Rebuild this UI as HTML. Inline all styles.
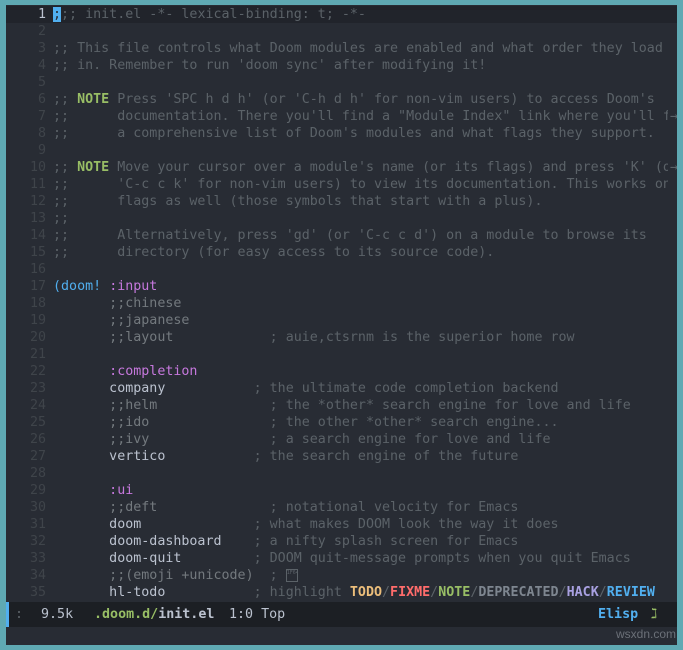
<!DOCTYPE html>
<html><head><style>
html,body{margin:0;padding:0;}
body{width:683px;height:650px;background:#5fa9b3;position:relative;overflow:hidden;font-family:"DejaVu Sans Mono","Liberation Mono",monospace;font-size:13.33px;}
#win{position:absolute;left:6px;top:5px;width:671px;height:640px;background:#282c34;overflow:hidden;}
.l{position:absolute;left:0;height:17px;line-height:17px;white-space:pre;width:671px;}
.n{display:inline-block;width:40px;text-align:right;color:#3f444a;}
.t{position:absolute;left:47px;top:0;width:615px;overflow:hidden;color:#bbc2cf;}
.c{color:#5b6268}.m{color:#73797e}.k{color:#c678dd}.b{color:#51afef}
.note{color:#98be65;font-weight:bold}
.arr{position:absolute;left:664px;color:#5b6268;}
#ml{position:absolute;left:0;top:597px;width:671px;height:25px;background:#1c1f24;line-height:25px;color:#bbc2cf;white-space:pre;font-size:13.33px;}
#ml span{position:absolute;top:0;}
</style></head><body>
<div id="win">
<div class="l" style="top:1px;background:#21242b"><span class="n" style="color:#bbc2cf">1</span><span class="t"><span style="background:#51afef;color:#282c34">;</span><span class="c">;; init.el -*- lexical-binding: t; -*-</span></span></div>
<div class="l" style="top:18px"><span class="n">2</span></div>
<div class="l" style="top:35px"><span class="n">3</span><span class="t c">;; This file controls what Doom modules are enabled and what order they load</span></div>
<div class="l" style="top:52px"><span class="n">4</span><span class="t c">;; in. Remember to run 'doom sync' after modifying it!</span></div>
<div class="l" style="top:69px"><span class="n">5</span></div>
<div class="l" style="top:86px"><span class="n">6</span><span class="t c">;; <span class="note">NOTE</span> Press 'SPC h d h' (or 'C-h d h' for non-vim users) to access Doom's</span></div>
<div class="l" style="top:103px"><span class="n">7</span><span class="t c">;;      documentation. There you'll find a "Module Index" link where you'll fi</span><span class="arr">→</span></div>
<div class="l" style="top:120px"><span class="n">8</span><span class="t c">;;      a comprehensive list of Doom's modules and what flags they support.</span></div>
<div class="l" style="top:137px"><span class="n">9</span></div>
<div class="l" style="top:154px"><span class="n">10</span><span class="t c">;; <span class="note">NOTE</span> Move your cursor over a module's name (or its flags) and press 'K' (or</span><span class="arr">→</span></div>
<div class="l" style="top:171px"><span class="n">11</span><span class="t c">;;      'C-c c k' for non-vim users) to view its documentation. This works on</span></div>
<div class="l" style="top:188px"><span class="n">12</span><span class="t c">;;      flags as well (those symbols that start with a plus).</span></div>
<div class="l" style="top:205px"><span class="n">13</span><span class="t c">;;</span></div>
<div class="l" style="top:222px"><span class="n">14</span><span class="t c">;;      Alternatively, press 'gd' (or 'C-c c d') on a module to browse its</span></div>
<div class="l" style="top:239px"><span class="n">15</span><span class="t c">;;      directory (for easy access to its source code).</span></div>
<div class="l" style="top:256px"><span class="n">16</span></div>
<div class="l" style="top:273px"><span class="n">17</span><span class="t"><span class="b">(doom!</span> <span class="k">:input</span></span></div>
<div class="l" style="top:290px"><span class="n">18</span><span class="t m">       ;;chinese</span></div>
<div class="l" style="top:307px"><span class="n">19</span><span class="t m">       ;;japanese</span></div>
<div class="l" style="top:324px"><span class="n">20</span><span class="t"><span class="m">       ;;layout            </span><span class="c">; auie,ctsrnm is the superior home row</span></span></div>
<div class="l" style="top:341px"><span class="n">21</span></div>
<div class="l" style="top:358px"><span class="n">22</span><span class="t k">       :completion</span></div>
<div class="l" style="top:375px"><span class="n">23</span><span class="t">       company           <span class="c">; the ultimate code completion backend</span></span></div>
<div class="l" style="top:392px"><span class="n">24</span><span class="t"><span class="m">       ;;helm              </span><span class="c">; the *other* search engine for love and life</span></span></div>
<div class="l" style="top:409px"><span class="n">25</span><span class="t"><span class="m">       ;;ido               </span><span class="c">; the other *other* search engine...</span></span></div>
<div class="l" style="top:426px"><span class="n">26</span><span class="t"><span class="m">       ;;ivy               </span><span class="c">; a search engine for love and life</span></span></div>
<div class="l" style="top:443px"><span class="n">27</span><span class="t">       vertico           <span class="c">; the search engine of the future</span></span></div>
<div class="l" style="top:460px"><span class="n">28</span></div>
<div class="l" style="top:477px"><span class="n">29</span><span class="t k">       :ui</span></div>
<div class="l" style="top:494px"><span class="n">30</span><span class="t"><span class="m">       ;;deft              </span><span class="c">; notational velocity for Emacs</span></span></div>
<div class="l" style="top:511px"><span class="n">31</span><span class="t">       doom              <span class="c">; what makes DOOM look the way it does</span></span></div>
<div class="l" style="top:528px"><span class="n">32</span><span class="t">       doom-dashboard    <span class="c">; a nifty splash screen for Emacs</span></span></div>
<div class="l" style="top:545px"><span class="n">33</span><span class="t">       doom-quit         <span class="c">; DOOM quit-message prompts when you quit Emacs</span></span></div>
<div class="l" style="top:562px"><span class="n">34</span><span class="t"><span class="m">       ;;(emoji +unicode)  </span><span class="c">; <span style="display:inline-block;width:12px;height:13px;border:1px solid #5b6268;font-size:5px;line-height:6px;vertical-align:middle;box-sizing:border-box;overflow:hidden">1F642</span></span></span></div>
<div class="l" style="top:579px"><span class="n">35</span><span class="t">       hl-todo           <span class="c">; highlight <b style="color:#ecbe7b">TODO</b>/<b style="color:#ff6c6b">FIXME</b>/<b style="color:#98be65">NOTE</b>/<b style="color:#7e8690">DEPRECATED</b>/<b style="color:#a9a1e1">HACK</b>/<b style="color:#51afef">REVIEW</b></span></span></div>
<div id="ml"><span style="left:0;width:3px;height:25px;background:#51afef"></span><span style="left:9px;color:#5b6268">:</span><span style="left:35px">9.5k</span><span style="left:88px"><b style="color:#98be65">.doom.d/</b><b>init.el</b></span><span style="left:223px">1:0 Top</span><span style="left:592px;color:#51afef;font-weight:bold">Elisp</span><span style="left:645px;color:#98be65">ℷ</span></div>
<div style="position:absolute;left:610px;top:622px;color:#6b7078;font-family:'Liberation Sans',sans-serif;font-size:12px">wsxdn.com</div>
</div>
</body></html>
